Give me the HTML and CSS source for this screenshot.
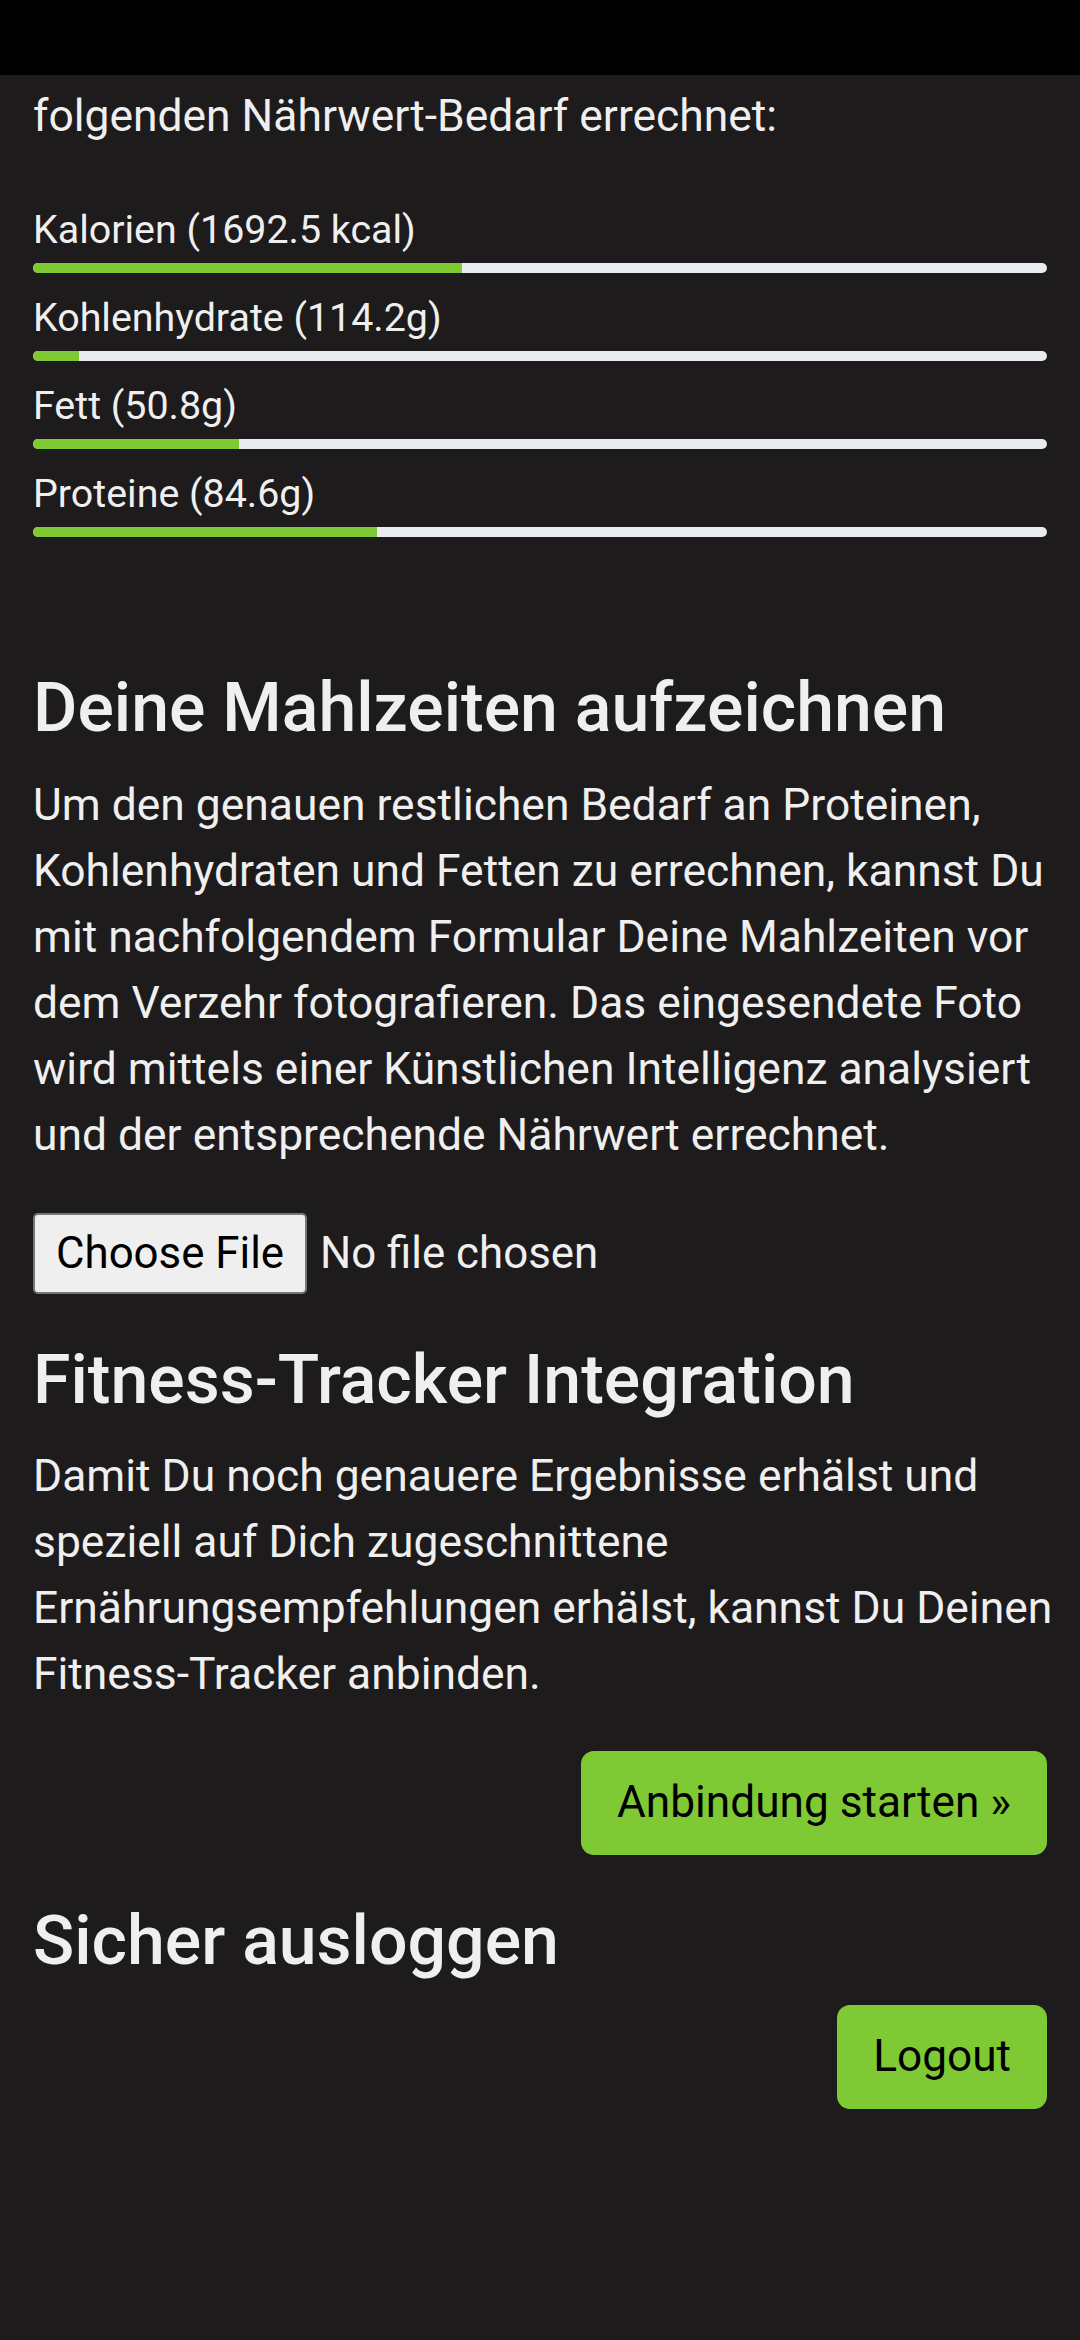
FILE: index.html
```html
<!DOCTYPE html>
<html lang="de">
<head>
<meta charset="utf-8">
<title>Nährwert-Bedarf</title>
<link rel="stylesheet" href="styles.css">
</head>
<body>
<div class="statusbar"></div>
<main class="page">
  <p class="text intro">folgenden Nährwert-Bedarf errechnet:</p>

  <div class="progress-list">
    <div class="progress-item">
      <div class="progress-label">Kalorien (1692.5 kcal)</div>
      <div class="track"><div class="fill" style="width:42.3%"></div></div>
    </div>
    <div class="progress-item">
      <div class="progress-label">Kohlenhydrate (114.2g)</div>
      <div class="track"><div class="fill" style="width:4.5%"></div></div>
    </div>
    <div class="progress-item">
      <div class="progress-label">Fett (50.8g)</div>
      <div class="track"><div class="fill" style="width:20.3%"></div></div>
    </div>
    <div class="progress-item">
      <div class="progress-label">Proteine (84.6g)</div>
      <div class="track"><div class="fill" style="width:33.9%"></div></div>
    </div>
  </div>

  <section class="section first">
    <h2 class="heading">Deine Mahlzeiten aufzeichnen</h2>
    <p class="text">Um den genauen restlichen Bedarf an Proteinen, Kohlenhydraten und Fetten zu errechnen, kannst Du mit nachfolgendem Formular Deine Mahlzeiten vor dem Verzehr fotografieren. Das eingesendete Foto wird mittels einer Künstlichen Intelligenz analysiert und der entsprechende Nährwert errechnet.</p>
    <label class="file">
      <input class="file-input" type="file" accept="image/*">
      <span class="file-btn">Choose File</span>
      <span class="file-name">No file chosen</span>
    </label>
  </section>

  <section class="section">
    <h2 class="heading">Fitness-Tracker Integration</h2>
    <p class="text">Damit Du noch genauere Ergebnisse erhälst und speziell auf Dich zugeschnittene Ernährungsempfehlungen erhälst, kannst Du Deinen Fitness-Tracker anbinden.</p>
    <div class="actions actions-gap">
      <a class="btn" href="#">Anbindung starten »</a>
    </div>
  </section>

  <section class="section">
    <h2 class="heading">Sicher ausloggen</h2>
    <div class="actions">
      <a class="btn" href="#">Logout</a>
    </div>
  </section>
</main>
</body>
</html>
```

FILE: styles.css
```css
html, body {
  margin: 0;
  padding: 0;
}

body {
  background: #1e1b1c;
  color: #efefef;
  font-family: Roboto, "Noto Sans", "Liberation Sans", sans-serif;
  min-height: 2340px;
}

.statusbar {
  height: 75px;
  background: #000;
}

.page {
  padding: 0 33px;
}

.text {
  margin: 0 -16px 0 0;
  font-size: 44.4px;
  line-height: 66px;
  font-weight: 400;
}

.intro {
  margin-top: 8px;
}

.progress-list {
  margin-top: 59px;
  display: flex;
  flex-direction: column;
  gap: 23px;
}

.progress-label {
  font-size: 39.4px;
  line-height: 44px;
}

.track {
  margin-top: 11px;
  height: 10px;
  border-radius: 5px;
  background: #e9ecef;
  overflow: hidden;
}

.fill {
  height: 100%;
  background: #7fc934;
}

.section {
  margin-top: 46px;
}

.section.first {
  margin-top: 131px;
}

.heading {
  margin: 0 0 22px;
  font-size: 68px;
  line-height: 81.6px;
  font-weight: 500;
  color: #efefef;
}

.file {
  margin-top: 45px;
  display: flex;
  align-items: center;
  gap: 13px;
  font-size: 43.8px;
  line-height: 1.2;
}

.file-input {
  display: none;
}

.file-btn {
  display: inline-flex;
  align-items: center;
  box-sizing: border-box;
  height: 81px;
  padding: 0 21px;
  background: #efefef;
  color: #000;
  border: 2px solid #767676;
  border-radius: 5px;
}

.file-name {
  color: #efefef;
}

.actions {
  display: flex;
  justify-content: flex-end;
}

.actions-gap {
  margin-top: 44px;
}

.btn {
  display: inline-block;
  box-sizing: border-box;
  height: 104px;
  padding: 18px 36px;
  font-size: 44.2px;
  line-height: 66.9px;
  color: #000;
  background: #7fc934;
  border: 0;
  border-radius: 13px;
  text-decoration: none;
}
```
